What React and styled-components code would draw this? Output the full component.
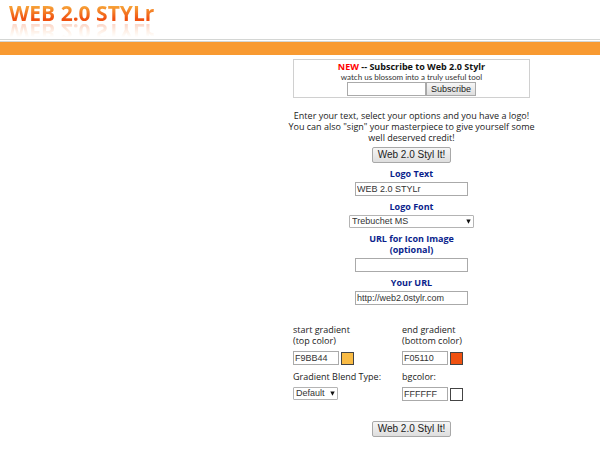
import React, { useState } from "react";
import styled, { createGlobalStyle } from "styled-components";

const GlobalStyle = createGlobalStyle`
  * {
    box-sizing: border-box;
  }
  body {
    margin: 0;
    background: #fff;
    color: #222;
    font-family: "Open Sans", sans-serif;
    font-size: 9px;
    line-height: 11px;
  }
`;

const Header = styled.header`
  height: 42px;
  padding-left: 9px;
  border-bottom: 3px double #d4d6d4;
`;

const Logo = styled.h1`
  display: inline-block;
  margin: 0;
  padding-top: 1px;
  font-size: 21px;
  line-height: 24px;
  font-weight: bold;
  color: transparent;
  background: linear-gradient(#f9bb44 10%, #f05110 75%);
  background-clip: text;
  -webkit-background-clip: text;
  -webkit-box-reflect: below -5px linear-gradient(transparent 30%, rgba(0, 0, 0, 0.3));
`;

const Bar = styled.div`
  height: 13px;
  background: #f89a31;
`;

const Main = styled.main`
  max-width: 237px;
  margin: 4px 70px 24px auto;
`;

const SubscribeBox = styled.form`
  display: flex;
  flex-direction: column;
  align-items: center;
  height: 39px;
  padding-top: 1px;
  border: 1px solid #d0d0d0;
`;

const SubscribeTitle = styled.label`
  color: #111;
  font-weight: bold;
  white-space: nowrap;
  span {
    color: #f00;
  }
`;

const Tagline = styled.div`
  color: #333;
  font-family: Lato, sans-serif;
  font-size: 8px;
  line-height: 10px;
`;

const Row = styled.div`
  display: flex;
  align-items: center;
  gap: ${(props) => props.$gap || 0}px;
`;

const Button = styled.button`
  height: ${(props) => (props.$small ? 14 : 16)}px;
  padding: 0 ${(props) => (props.$small ? 4 : 5)}px;
  border: 1px solid #a8a8a8;
  border-radius: ${(props) => (props.$small ? 0 : 2)}px;
  background: linear-gradient(#f6f6f6, #dedede);
  color: #222;
  font-family: "Liberation Sans", Arial, sans-serif;
  font-size: ${(props) => (props.$small ? 9 : 10)}px;
  line-height: 12px;
  white-space: nowrap;
`;

const Input = styled.input`
  width: ${(props) => props.$width}px;
  height: 14px;
  padding: 0 1px;
  border: 1px solid #aaa;
  background: #fff;
  color: #333;
  font-family: "Liberation Sans", Arial, sans-serif;
  font-size: 9px;
  line-height: 12px;
`;

const Intro = styled.p`
  display: flex;
  flex-direction: column;
  align-items: center;
  margin: 12px 0 4px;
  white-space: nowrap;
`;

const StylForm = styled.form`
  display: flex;
  flex-direction: column;
  align-items: center;
  gap: 5px;
`;

const Field = styled.div`
  display: flex;
  flex-direction: column;
  align-items: center;
  gap: 3px;
`;

const FieldLabel = styled.label`
  color: #0a1e8c;
  font-weight: bold;
  text-align: center;
`;

const SelectWrap = styled.div`
  position: relative;
  width: ${(props) => props.$width}px;
  height: 13px;
  svg {
    position: absolute;
    top: 4px;
    right: 3px;
    pointer-events: none;
  }
`;

const NativeSelect = styled.select`
  display: block;
  appearance: none;
  width: 100%;
  height: 13px;
  padding: 0 2px;
  border: 1px solid #b4b4b4;
  border-radius: 1px;
  background: #fff;
  color: #333;
  font-family: "Liberation Sans", Arial, sans-serif;
  font-size: 9px;
  line-height: 11px;
`;

const Options = styled.div`
  display: grid;
  grid-template-columns: 109px 1fr;
  row-gap: 6px;
  width: 100%;
  margin: 14px 0 15px;
`;

const Option = styled.div`
  display: flex;
  flex-direction: column;
  align-items: flex-start;
  gap: 5px;
`;

const Swatch = styled.span`
  width: 13px;
  height: 13px;
  border: 1px solid #444;
  background: ${(props) => props.$color};
`;

const Select = ({ id, width, options }) => (
  <SelectWrap $width={width}>
    <NativeSelect id={id}>
      {options.map((option) => (
        <option key={option}>{option}</option>
      ))}
    </NativeSelect>
    <svg width="5" height="5" viewBox="0 0 5 5" aria-hidden="true">
      <path d="M0.3 0.5h4.4L2.5 4.8z" fill="#111" />
    </svg>
  </SelectWrap>
);

const ColorOption = ({ id, label, initial }) => {
  const [color, setColor] = useState(initial);

  return (
    <Option>
      <label htmlFor={id}>{label}</label>
      <Row $gap={2}>
        <Input
          id={id}
          $width={46}
          value={color}
          onChange={(e) => setColor(e.target.value)}
        />
        <Swatch $color={`#${color}`} />
      </Row>
    </Option>
  );
};

const App = () => {
  const handleSubmit = (e) => e.preventDefault();

  return (
    <>
      <GlobalStyle />
      <Header>
        <Logo>WEB 2.0 STYLr</Logo>
      </Header>
      <Bar />
      <Main>
        <SubscribeBox onSubmit={handleSubmit}>
          <SubscribeTitle htmlFor="subscribe">
            <span>NEW</span> -- Subscribe to Web 2.0 Stylr
          </SubscribeTitle>
          <Tagline>watch us blossom into a truly useful tool</Tagline>
          <Row>
            <Input id="subscribe" $width={79} />
            <Button type="submit" $small>
              Subscribe
            </Button>
          </Row>
        </SubscribeBox>
        <Intro>
          <span>Enter your text, select your options and you have a logo!</span>
          <span>You can also "sign" your masterpiece to give yourself some</span>
          <span>well deserved credit!</span>
        </Intro>
        <StylForm onSubmit={handleSubmit}>
          <Button type="submit">Web 2.0 Styl It!</Button>
          <Field>
            <FieldLabel htmlFor="logo-text">Logo Text</FieldLabel>
            <Input id="logo-text" $width={113} defaultValue="WEB 2.0 STYLr" />
          </Field>
          <Field>
            <FieldLabel htmlFor="logo-font">Logo Font</FieldLabel>
            <Select id="logo-font" width={125} options={["Trebuchet MS"]} />
          </Field>
          <Field>
            <FieldLabel htmlFor="icon-url">
              URL for Icon Image
              <br />
              (optional)
            </FieldLabel>
            <Input id="icon-url" $width={113} />
          </Field>
          <Field>
            <FieldLabel htmlFor="your-url">Your URL</FieldLabel>
            <Input
              id="your-url"
              $width={113}
              defaultValue="http://web2.0stylr.com"
            />
          </Field>
          <Options>
            <ColorOption
              id="start"
              initial="F9BB44"
              label={
                <>
                  start gradient
                  <br />
                  (top color)
                </>
              }
            />
            <ColorOption
              id="end"
              initial="F05110"
              label={
                <>
                  end gradient
                  <br />
                  (bottom color)
                </>
              }
            />
            <Option>
              <label htmlFor="blend">Gradient Blend Type:</label>
              <Select id="blend" width={45} options={["Default"]} />
            </Option>
            <ColorOption id="bgcolor" initial="FFFFFF" label="bgcolor:" />
          </Options>
          <Button type="submit">Web 2.0 Styl It!</Button>
        </StylForm>
      </Main>
    </>
  );
};

export default App;
